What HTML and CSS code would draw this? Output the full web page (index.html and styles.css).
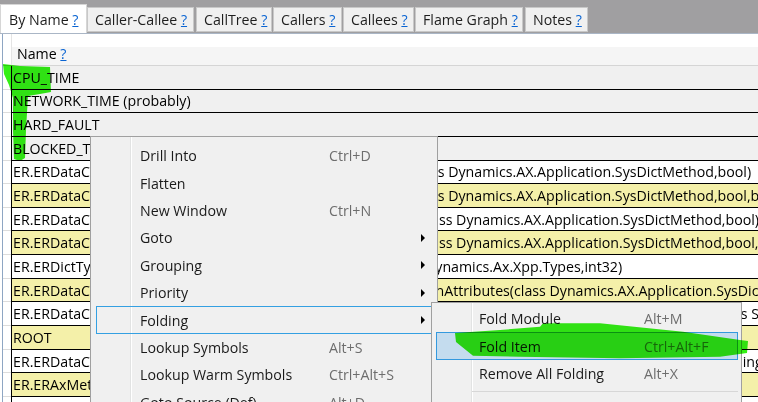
FILE: index.html
```html
<!DOCTYPE html>
<html>
<head>
<meta charset="utf-8">
<title>By Name</title>
<link rel="stylesheet" href="styles.css">
</head>
<body>
<div class="app">
  <div class="tabstrip">
    <div class="tab active w1">By Name&nbsp;<a class="q">?</a></div>
    <div class="tab w2">Caller-Callee&nbsp;<a class="q">?</a></div>
    <div class="tab w3">CallTree&nbsp;<a class="q">?</a></div>
    <div class="tab w4">Callers&nbsp;<a class="q">?</a></div>
    <div class="tab w5">Callees&nbsp;<a class="q">?</a></div>
    <div class="tab w6">Flame Graph&nbsp;<a class="q">?</a></div>
    <div class="tab w7">Notes&nbsp;<a class="q">?</a></div>
  </div>
  <div class="panel">
    <div class="grid">
      <div class="ghead"><div class="rh"></div><div class="hcell">Name&nbsp;<a class="q">?</a></div></div>
      <div class="row sys"><div class="rh"></div><div class="cell"><span class="lt">CPU_TIME</span></div></div>
      <div class="row sys"><div class="rh"></div><div class="cell"><span class="lt">NETWORK_TIME (probably)</span></div></div>
      <div class="row sys"><div class="rh"></div><div class="cell"><span class="lt">HARD_FAULT</span></div></div>
      <div class="row sys"><div class="rh"></div><div class="cell"><span class="lt">BLOCKED_TIME</span></div></div>
      <div class="row"><div class="rh"></div><div class="cell"><span class="lt">ER.ERDataContainerDescriptor.createFieldDescriptor(cla</span><span class="rt">ss Dynamics.AX.Application.SysDictMethod,bool)</span></div></div>
      <div class="row hl"><div class="rh"></div><div class="cell"><span class="lt">ER.ERDataContainerDescriptor.createFieldDescriptors(cla</span><span class="rt">ss Dynamics.AX.Application.SysDictMethod,bool,bool)</span></div></div>
      <div class="row"><div class="rh"></div><div class="cell"><span class="lt">ER.ERDataContainerDescriptor.addMethodDescriptor(cl</span><span class="rt">ass Dynamics.AX.Application.SysDictMethod,bool)</span></div></div>
      <div class="row hl"><div class="rh"></div><div class="cell"><span class="lt">ER.ERDataContainerDescriptor.addMethodDescriptors(cl</span><span class="rt">ass Dynamics.AX.Application.SysDictMethod,bool,bool)</span></div></div>
      <div class="row"><div class="rh"></div><div class="cell"><span class="lt">ER.ERDictType.construct(class</span><span class="rt back">Dynamics.Ax.Xpp.Types,int32)</span></div></div>
      <div class="row hl"><div class="rh"></div><div class="cell"><span class="lt">ER.ERDataContainerDescriptor.getMethodDescripti</span><span class="rt back2">onAttributes(class Dynamics.AX.Application.SysDictMethod)</span></div></div>
      <div class="row"><div class="rh"></div><div class="cell"><span class="lt far">ER.ERDataContainerDescriptor.createMethodDescriptor(class Dynamics.AX.Application.SysDictMethod,bool,cla</span><span class="rt">ss SysDictClass)</span></div></div>
      <div class="row hl"><div class="rh"></div><div class="cell"><span class="lt">ROOT</span></div></div>
      <div class="row"><div class="rh"></div><div class="cell"><span class="lt far">ER.ERDataContainerDescriptor.getMethodDescriptorsFromClassTypeUsingCache(class Dynamics.AX.Xpp.Str</span><span class="rt">ning)</span></div></div>
      <div class="row hl"><div class="rh"></div><div class="cell"><span class="lt">ER.ERAxMethodDescriptor</span></div></div>
      <div class="row"><div class="rh"></div><div class="cell"><span class="lt">ER.ERDataContainerDescriptor</span></div></div>
    </div>
  </div>

  <div class="menu ctx">
    <div class="item"><span class="label">Drill Into</span><span class="short">Ctrl+D</span></div>
    <div class="item"><span class="label">Flatten</span><span class="short"></span></div>
    <div class="item"><span class="label">New Window</span><span class="short">Ctrl+N</span></div>
    <div class="item"><span class="label">Goto</span><span class="short"></span><svg class="arrow" width="4" height="8" viewBox="0 0 4 8"><path d="M0 0L4 4L0 8Z"/></svg></div>
    <div class="item"><span class="label">Grouping</span><span class="short"></span><svg class="arrow" width="4" height="8" viewBox="0 0 4 8"><path d="M0 0L4 4L0 8Z"/></svg></div>
    <div class="item"><span class="label">Priority</span><span class="short"></span><svg class="arrow" width="4" height="8" viewBox="0 0 4 8"><path d="M0 0L4 4L0 8Z"/></svg></div>
    <div class="item open"><span class="label">Folding</span><span class="short"></span><svg class="arrow" width="4" height="8" viewBox="0 0 4 8"><path d="M0 0L4 4L0 8Z"/></svg></div>
    <div class="item"><span class="label">Lookup Symbols</span><span class="short">Alt+S</span></div>
    <div class="item"><span class="label">Lookup Warm Symbols</span><span class="short">Ctrl+Alt+S</span></div>
    <div class="item"><span class="label">Goto Source (Def)</span><span class="short">Alt+D</span></div>
  </div>

  <div class="menu sub">
    <div class="item"><span class="label">Fold Module</span><span class="short">Alt+M</span></div>
    <div class="item sel"><span class="label">Fold Item</span><span class="short">Ctrl+Alt+F</span></div>
    <div class="item"><span class="label">Remove All Folding</span><span class="short">Alt+X</span></div>
    <div class="sep"></div>
  </div>

  <svg class="marker" width="758" height="402" viewBox="0 0 758 402">
    <path d="M3 64 L20 66 L50 67 L51 92 L40 94 L28 96 L26 130 L25 158 L20 161 L14 159 L13 130 L13 98 L9 85 L4 74 Z"/>
    <path d="M455 333 L500 330 L540 326.7 L543 323.3 L600 323.3 L683 331.7 L740 340 L748 341 L747 353 L720 356.7 L620 358.3 L520 356.7 L473 355.7 L456 342 Z"/>
  </svg>
</div>
</body>
</html>
```
FILE: styles.css
```css
* { box-sizing: border-box; }
html, body { margin: 0; padding: 0; }
body {
  width: 758px;
  height: 402px;
  overflow: hidden;
  background: #fff;
  color: #000;
  font-family: "Open Sans", "Liberation Sans", sans-serif;
  font-size: 14.2px;
}
.app {
  position: relative;
  width: 758px;
  height: 402px;
  overflow: hidden;
}

/* tabs */
.tabstrip {
  height: 33px;
  background: #a09fa1;
  display: flex;
  align-items: flex-end;
}
.tab {
  flex: none;
  height: 25px;
  margin-bottom: 1px;
  margin-left: 1px;
  padding-left: 7px;
  background: #f0f0f0;
  border: 1px solid #c8c8c8;
  display: flex;
  align-items: center;
  color: #1e1e1e;
  white-space: nowrap;
  overflow: hidden;
}
.tab.active {
  height: 29px;
  margin-bottom: 0;
  margin-left: 0;
  padding-left: 8px;
  background: #fff;
  border-color: #d6d6d6;
  border-bottom: none;
}
.w1 { width: 87px; }
.w2 { width: 107px; margin-left: 0; }
.w3 { width: 76px; margin-left: 2px; }
.w4 { width: 69px; }
.w5 { width: 71px; }
.w6 { width: 108px; }
.w7 { width: 63px; margin-left: 2px; }
.q {
  color: #0a64d2;
  text-decoration: underline;
}

/* grid */
.panel {
  border-top: 1px solid #aab6c6;
  padding-left: 2px;
  background: #fff;
}
.grid {
  border-left: 1px solid #8ea6c3;
}
.ghead {
  display: flex;
  height: 32px;
  border-bottom: 1px solid #d5d5d5;
  background: linear-gradient(#fff 0, #fff 13px, #f5f5f5 13px);
}
.ghead .rh {
  width: 8px;
  flex: none;
  background: #fff;
}
.hcell {
  flex: 1;
  border-left: 1px solid #e4e4e4;
  padding: 7px 0 0 5px;
  display: flex;
  align-items: center;
  white-space: nowrap;
}
.row {
  display: flex;
  height: 23.65px;
}
.row .rh {
  width: 8px;
  flex: none;
  background: #fff;
  border-bottom: 1px solid #dcdcdc;
}
.cell {
  flex: 1;
  min-width: 0;
  display: flex;
  align-items: center;
  padding-left: 1px;
  border-left: 1px solid #000;
  border-bottom: 1px solid #000;
  white-space: nowrap;
  overflow: hidden;
}
.sys .cell { background: #f0f0f0; }
.hl .cell { background: #f4f0a9; }
.lt {
  flex: none;
  width: 418px;
  overflow: hidden;
}
.lt.far { width: 721px; }
.rt { flex: none; }
.rt.back { margin-left: -6px; }
.rt.back2 { margin-left: -4px; }

/* menus */
.menu {
  position: absolute;
  border: 1px solid #a0a0a0;
  background: linear-gradient(to right, #f0f0f0 39px, #e2e3e3 39px, #e2e3e3 40px, #fff 40px, #fff 41px, #f0f0f0 41px);
  color: #1a1a1a;
  white-space: nowrap;
}
.ctx {
  left: 90px;
  top: 136px;
  width: 348px;
  height: 320px;
  padding: 5px 5px 0 5px;
}
.sub {
  left: 431px;
  top: 302px;
  width: 311px;
  height: 200px;
  padding: 2px 3px 0 4px;
}
.item {
  height: 27.4px;
  display: flex;
  align-items: center;
  border: 1px solid transparent;
}
.ctx .item { padding-left: 43px; }
.sub .item { padding-left: 42px; }
.label { flex: none; }
.ctx .label { width: 189px; }
.sub .label { width: 165px; }
.short {
  flex: 1;
  color: #6d6d6d;
}
.arrow {
  flex: none;
  margin-right: 6px;
  fill: #000;
}
.item.open { border-color: #34a0e2; }
.item.sel {
  border-color: #3399de;
  background: #c4dcee;
}
.sep {
  margin: 3.8px 0 3.8px 36px;
  border-top: 1px solid #d7d7d7;
}

/* highlighter strokes */
.marker {
  position: absolute;
  left: 0;
  top: 0;
  pointer-events: none;
  mix-blend-mode: multiply;
  fill: #33f015;
}
```
